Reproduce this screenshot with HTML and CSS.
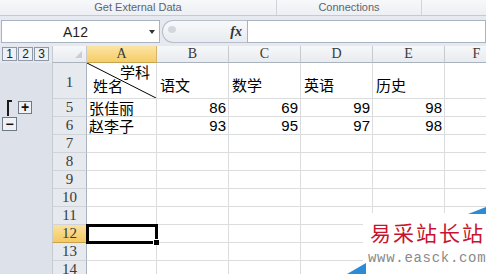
FILE: index.html
```html
<!DOCTYPE html>
<html lang="zh-CN">
<head>
    <meta charset="UTF-8">
    <title>Sheet1</title>
    <link rel="stylesheet" href="styles.css">
</head>
<body>
    <div class="ribbon">
        <div class="group g1">Get External Data</div>
        <div class="group g2">Connections</div>
        <div class="group g3"></div>
    </div>

    <div class="fbar">
        <div class="namebox"><span class="ref">A12</span><span class="caret"></span></div>
        <div class="fxbox"><span class="knob"></span><i class="fx">fx</i></div>
        <div class="finput"></div>
    </div>

    <div class="sheet">
        <!-- header row -->
        <div class="ol levels"><span>1</span><span>2</span><span>3</span></div>
        <div class="corner"></div>
        <div class="ch on">A</div>
        <div class="ch">B</div>
        <div class="ch">C</div>
        <div class="ch">D</div>
        <div class="ch">E</div>
        <div class="ch">F</div>

        <!-- row 1 -->
        <div class="ol"></div>
        <div class="rh r1h">1</div>
        <div class="c diag">
            <svg class="slash" viewBox="0 0 69 35" preserveAspectRatio="none"><line x1="0" y1="0" x2="69" y2="35" /></svg>
            <div class="top">学科</div>
            <div class="bottom">姓名</div>
        </div>
        <div class="c r1">语文</div>
        <div class="c r1">数学</div>
        <div class="c r1">英语</div>
        <div class="c r1">历史</div>
        <div class="c"></div>

        <!-- row 5 -->
        <div class="ol grp"><span class="bracket"></span><span class="obtn">+</span></div>
        <div class="rh">5</div>
        <div class="c">张佳丽</div>
        <div class="c num">86</div>
        <div class="c num">69</div>
        <div class="c num">99</div>
        <div class="c num">98</div>
        <div class="c"></div>

        <!-- row 6 -->
        <div class="ol grp2"><span class="obtn minus">−</span></div>
        <div class="rh">6</div>
        <div class="c">赵李子</div>
        <div class="c num">93</div>
        <div class="c num">95</div>
        <div class="c num">97</div>
        <div class="c num">98</div>
        <div class="c"></div>

        <div class="ol"></div><div class="rh">7</div>
        <div class="c"></div><div class="c"></div><div class="c"></div><div class="c"></div><div class="c"></div><div class="c"></div>

        <div class="ol"></div><div class="rh">8</div>
        <div class="c"></div><div class="c"></div><div class="c"></div><div class="c"></div><div class="c"></div><div class="c"></div>

        <div class="ol"></div><div class="rh">9</div>
        <div class="c"></div><div class="c"></div><div class="c"></div><div class="c"></div><div class="c"></div><div class="c"></div>

        <div class="ol"></div><div class="rh">10</div>
        <div class="c"></div><div class="c"></div><div class="c"></div><div class="c"></div><div class="c"></div><div class="c"></div>

        <div class="ol"></div><div class="rh">11</div>
        <div class="c"></div><div class="c"></div><div class="c"></div><div class="c"></div><div class="c"></div><div class="c"></div>

        <div class="ol"></div><div class="rh on">12</div>
        <div class="c sel"></div><div class="c"></div><div class="c"></div><div class="c"></div><div class="c"></div><div class="c"></div>

        <div class="ol"></div><div class="rh">13</div>
        <div class="c"></div><div class="c"></div><div class="c"></div><div class="c"></div><div class="c"></div><div class="c"></div>

        <div class="ol"></div><div class="rh">14</div>
        <div class="c"></div><div class="c"></div><div class="c"></div><div class="c"></div><div class="c"></div><div class="c"></div>

        <!-- watermark -->
        <div class="wm">
            <svg class="wm-bg" viewBox="0 0 141 68">
                <rect x="18" y="7" width="123" height="61" fill="#fff" />
                <polygon points="123,8 141,1 141,8" fill="#2c8ad6" />
                <polygon points="2,68 21,57 21,68" fill="#2c8ad6" />
            </svg>
            <div class="wm-title">易采站长站</div>
            <div class="wm-url">www.easck.com</div>
        </div>
    </div>
</body>
</html>
```

FILE: styles.css
```css
body {
    margin: 0;
    width: 486px;
    height: 274px;
    overflow: hidden;
    background: #e6eaf0;
    font-family: 'Liberation Sans', Arial, sans-serif;
}

/* ribbon group labels */
.ribbon {
    display: flex;
    height: 16px;
    box-sizing: border-box;
    background: linear-gradient(#f7f8fa, #eceff3);
    border-bottom: 1px solid #c4cad3;
}

.group {
    font-size: 11px;
    line-height: 15px;
    color: #5d646e;
    text-align: center;
    border-right: 1px solid #d0d5dc;
}

.g1 { width: 276px; }
.g2 { width: 144px; }
.g3 { flex: 1; border-right: none; }

/* formula bar */
.fbar {
    display: flex;
    height: 23px;
    margin-top: 4px;
}

.namebox {
    width: 159px;
    margin-left: 1px;
    box-sizing: border-box;
    background: #fff;
    border: 1px solid #a9b2bf;
    display: flex;
    align-items: center;
}

.ref {
    flex: 1;
    text-align: center;
    font-size: 14px;
    color: #1e1e1e;
}

.caret {
    width: 0;
    height: 0;
    border-left: 3.5px solid transparent;
    border-right: 3.5px solid transparent;
    border-top: 4px solid #333;
    margin-right: 4px;
}

.fxbox {
    width: 85px;
    margin-left: 2px;
    box-sizing: border-box;
    border: 1px solid #b7bec8;
    border-right: none;
    border-radius: 11px 0 0 11px;
    background: linear-gradient(#f8f9fb, #e8ebef);
    display: flex;
    align-items: center;
    justify-content: space-between;
    padding: 0 5px 0 5px;
}

.knob {
    width: 8px;
    height: 7px;
    margin-bottom: 4px;
    border-radius: 50%;
    background: #d4d8de;
}

.fx {
    font-family: 'Liberation Serif', serif;
    font-size: 14px;
    font-weight: bold;
    color: #333;
}

.finput {
    flex: 1;
    background: #fff;
    border: 1px solid #a9b2bf;
}

/* sheet grid */
.sheet {
    position: relative;
    margin-top: 3px;
    height: 228px;
    overflow: hidden;
    display: grid;
    grid-template-columns: 52px 35px 70px 72px 72px 72px 72px 64px;
    grid-template-rows: 17px 36px repeat(10, 18px);
}

.sheet > div {
    box-sizing: border-box;
}

.ol {
    background: #dde2ea;
}

.levels {
    display: flex;
    gap: 1px;
    padding: 1px 0 0 2px;
    background: #e4e8ee;
}

.levels span {
    width: 15px;
    height: 14px;
    box-sizing: border-box;
    border: 1px solid #8e9aa9;
    background: #edf0f4;
    font-size: 12px;
    line-height: 12px;
    text-align: center;
    color: #222;
}

.grp {
    display: flex;
    align-items: flex-start;
    gap: 6px;
    padding: 1px 0 0 7px;
}

.bracket {
    width: 5px;
    height: 16px;
    box-sizing: border-box;
    border-left: 2px solid #1a1a1a;
    border-top: 2px solid #1a1a1a;
}

.obtn {
    width: 14px;
    height: 13px;
    margin-top: 1px;
    box-sizing: border-box;
    border: 1px solid #6f7885;
    background: #eef1f5;
    font-size: 14px;
    font-weight: bold;
    line-height: 10px;
    text-align: center;
    color: #111;
}

.grp2 {
    padding-left: 2px;
}

.obtn.minus {
    display: block;
    width: 15px;
    height: 14px;
    margin-top: 0;
    line-height: 12px;
}

.corner, .ch {
    background: linear-gradient(#f6f7f9, #e8ebef);
    border-right: 1px solid #c6cbd2;
    border-bottom: 1px solid #aab2bd;
}

.corner {
    position: relative;
    border-left: 1px solid #c6cbd2;
}

.corner::after {
    content: '';
    position: absolute;
    right: 4px;
    bottom: 4px;
    border-left: 7px solid transparent;
    border-bottom: 7px solid #c9ced5;
}

.ch {
    font-family: 'Liberation Serif', serif;
    font-size: 14px;
    line-height: 16px;
    text-align: center;
    color: #3a3a3a;
}

.ch.on {
    background: linear-gradient(#fbe4a4, #f6cd68);
    border-bottom-color: #c7a24e;
    border-right-color: #d6b468;
}

.rh {
    background: #e6e9ee;
    border-left: 1px solid #c6cbd2;
    border-right: 1px solid #aab2bd;
    border-bottom: 1px solid #cfd4db;
    font-family: 'Liberation Serif', serif;
    font-size: 15px;
    line-height: 17px;
    text-align: center;
    color: #3a3a3a;
}

.r1h {
    display: flex;
    align-items: flex-end;
    justify-content: center;
    padding-bottom: 7px;
}

.rh.on {
    background: linear-gradient(#fbe1a0, #f5c961);
    border-bottom-color: #c7a24e;
}

.c {
    background: #fff;
    border-right: 1px solid #dadcdd;
    border-bottom: 1px solid #dadcdd;
    font-family: 'Noto Sans CJK SC', sans-serif;
    font-size: 15px;
    line-height: 17px;
    padding: 0 2px;
    white-space: nowrap;
    color: #000;
}

.num {
    text-align: right;
    font-family: 'Liberation Sans', Arial, sans-serif;
    line-height: 18px;
}

.r1 {
    display: flex;
    align-items: flex-end;
    padding: 0 0 5px 3px;
}

.diag {
    position: relative;
    padding: 2px 6px 0 6px;
    line-height: 14px;
}

.slash {
    position: absolute;
    left: 0;
    top: 0;
    width: 69px;
    height: 35px;
}

.slash line {
    stroke: #000;
    stroke-width: 1;
    vector-effect: non-scaling-stroke;
}

.diag .top {
    text-align: right;
}

.sel {
    position: relative;
    z-index: 1;
    outline: 3px solid #000;
    outline-offset: -2px;
}

.sel::after {
    content: '';
    position: absolute;
    right: -3px;
    bottom: -3px;
    width: 5px;
    height: 5px;
    background: #000;
    border: 1px solid #fff;
    border-right: none;
    border-bottom: none;
}

/* site watermark over the corner */
.wm {
    position: absolute;
    right: 0;
    bottom: 0;
    width: 141px;
    height: 68px;
    z-index: 2;
    padding: 14px 0 0 25px;
    box-sizing: border-box;
    white-space: nowrap;
}

.wm-bg {
    position: absolute;
    left: 0;
    top: 0;
    width: 141px;
    height: 68px;
    z-index: -1;
}

.wm-title {
    font-family: 'Noto Sans CJK SC', sans-serif;
    font-size: 21px;
    line-height: 24px;
    letter-spacing: 2px;
    color: #c8132f;
}

.wm-url {
    margin-top: 6px;
    margin-left: -2px;
    font-family: 'Liberation Mono', monospace;
    font-size: 14px;
    line-height: 16px;
    letter-spacing: 0.7px;
    color: #8a8a8a;
}
```
